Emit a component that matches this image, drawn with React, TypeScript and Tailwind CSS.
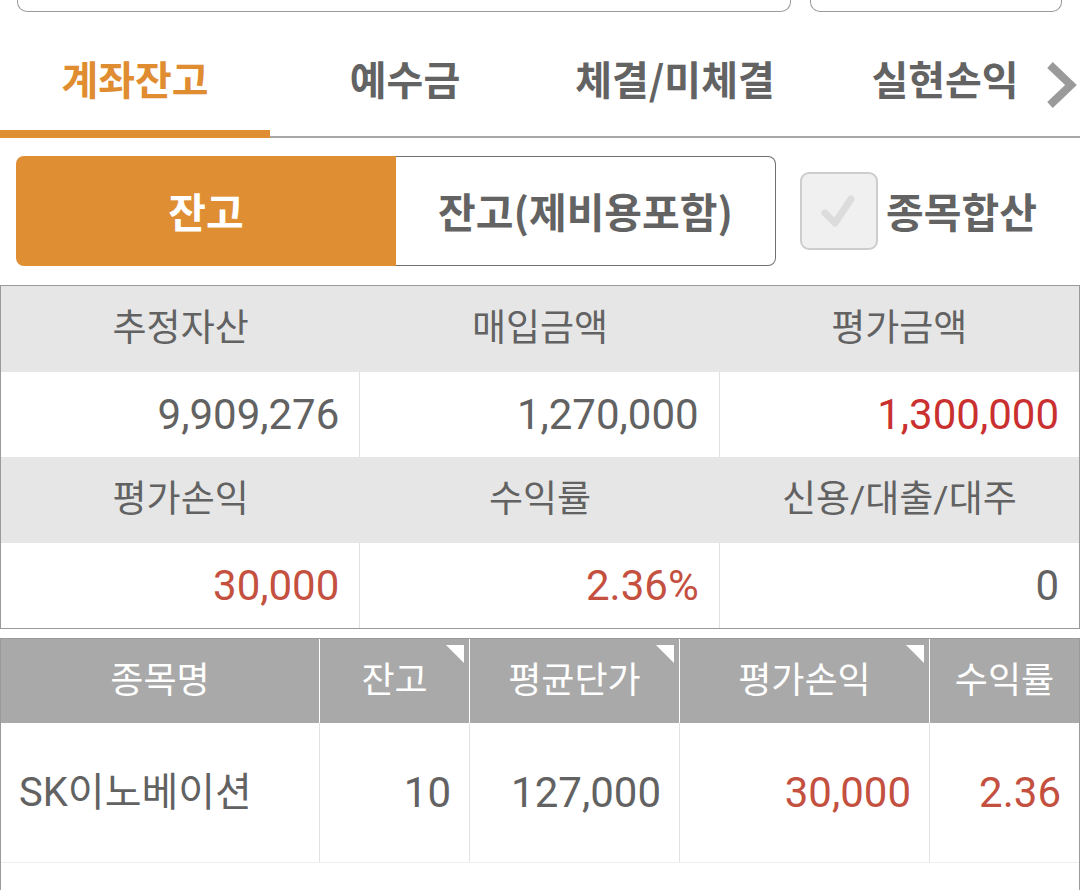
import React from "react";

const KR = "font-['Roboto','Noto_Sans_CJK_KR',sans-serif]";

function Tri() {
  return (
    <svg className="absolute top-[6px] right-[5px]" width="18" height="18" viewBox="0 0 18 18">
      <polygon points="0,0 18,0 18,18" fill="#ffffff" />
    </svg>
  );
}

export default function App() {
  const tabs = ["계좌잔고", "예수금", "체결/미체결", "실현손익"];
  return (
    <div className={`w-[1080px] h-[890px] overflow-hidden bg-white ${KR}`}>
      {/* top inputs edge */}
      <div className="flex h-[12px]">
        <div className="ml-[17px] w-[774px] h-full border border-t-0 border-[#9a9a9a] rounded-b-[10px]" />
        <div className="ml-[19px] w-[252px] h-full border border-t-0 border-[#9a9a9a] rounded-b-[10px]" />
      </div>

      {/* tabs */}
      <div className="relative flex h-[126px] border-b-[2px] border-[#a8a8a8]">
        {tabs.map((t, i) => (
          <div
            key={t}
            className={`relative w-[270px] flex items-center justify-center pt-[8px] text-[40px] font-bold font-['Noto_Sans_CJK_KR',sans-serif] ${
              i === 0 ? "text-[#e08d31]" : "text-[#636363]"
            }`}
          >
            {t}
            {i === 0 && <div className="absolute left-0 right-0 bottom-[-2px] h-[8px] bg-[#df8e33]" />}
          </div>
        ))}
        <svg className="absolute right-[3px] top-[50px]" width="32" height="46" viewBox="0 0 32 46">
          <polyline points="5,3 26,23 5,43" fill="none" stroke="#9a9a9a" strokeWidth="8" />
        </svg>
      </div>

      {/* segmented + checkbox */}
      <div className="flex items-center mt-[18px] h-[110px]">
        <div className="ml-[16px] w-[380px] h-full rounded-l-[8px] bg-[#df8e33] flex items-center justify-center text-white text-[41px] font-bold font-['Noto_Sans_CJK_KR',sans-serif]">
          잔고
        </div>
        <div className="w-[380px] h-full rounded-r-[8px] border border-l-0 border-[#707070] bg-white flex items-center justify-center text-[#636363] text-[41px] font-bold font-['Noto_Sans_CJK_KR',sans-serif]">
          잔고(제비용포함)
        </div>
        <div className="ml-[24px] w-[78px] h-[78px] rounded-[9px] border-[2px] border-[#cdcdcd] bg-[#f0f0f0] flex items-center justify-center">
          <svg width="44" height="44" viewBox="0 0 44 44">
            <polyline points="8,24 18,34 34,10" fill="none" stroke="#dcdcdc" strokeWidth="7" strokeLinecap="round" strokeLinejoin="round" />
          </svg>
        </div>
        <div className="ml-[8px] text-[41px] font-bold text-[#636363] font-['Noto_Sans_CJK_KR',sans-serif]">종목합산</div>
      </div>

      {/* summary */}
      <div className="mt-[19px] border border-[#9a9a9a] text-[#626262]">
        <div className="grid grid-cols-3 h-[86px] bg-[#e6e6e6] text-[37px]">
          <div className="flex items-center justify-center">추정자산</div>
          <div className="flex items-center justify-center">매입금액</div>
          <div className="flex items-center justify-center">평가금액</div>
        </div>
        <div className="grid grid-cols-3 h-[85px] text-[42px]">
          <div className="flex items-center justify-end pr-[20px] border-r border-[#e0e0e0]">9,909,276</div>
          <div className="flex items-center justify-end pr-[20px] border-r border-[#e0e0e0]">1,270,000</div>
          <div className="flex items-center justify-end pr-[20px] text-[#c9302f]">1,300,000</div>
        </div>
        <div className="grid grid-cols-3 h-[86px] bg-[#e6e6e6] text-[37px]">
          <div className="flex items-center justify-center">평가손익</div>
          <div className="flex items-center justify-center">수익률</div>
          <div className="flex items-center justify-center">신용/대출/대주</div>
        </div>
        <div className="grid grid-cols-3 h-[85px] text-[42px]">
          <div className="flex items-center justify-end pr-[20px] border-r border-[#e0e0e0] text-[#c4503f]">30,000</div>
          <div className="flex items-center justify-end pr-[20px] border-r border-[#e0e0e0] text-[#c4503f]">2.36%</div>
          <div className="flex items-center justify-end pr-[20px]">0</div>
        </div>
      </div>

      {/* holdings */}
      <div className="mt-[9px] border-x border-t border-[#9a9a9a] h-[260px]">
        <div className="flex h-[84px] bg-[#a9a9a9] text-white text-[36px]">
          <div className="w-[319px] flex items-center justify-center border-r border-white">종목명</div>
          <div className="relative w-[150px] flex items-center justify-center border-r border-white">
            잔고
            <Tri />
          </div>
          <div className="relative w-[210px] flex items-center justify-center border-r border-white">
            평균단가
            <Tri />
          </div>
          <div className="relative w-[250px] flex items-center justify-center border-r border-white">
            평가손익
            <Tri />
          </div>
          <div className="flex-1 flex items-center justify-center">수익률</div>
        </div>
        <div className="flex h-[140px] border-b border-[#eeeeee] text-[42px] text-[#626262]">
          <div className="w-[319px] flex items-center pl-[18px] border-r border-[#e2e2e2] text-[40px]">SK이노베이션</div>
          <div className="w-[150px] flex items-center justify-end pr-[18px] border-r border-[#e2e2e2]">10</div>
          <div className="w-[210px] flex items-center justify-end pr-[18px] border-r border-[#e2e2e2]">127,000</div>
          <div className="w-[250px] flex items-center justify-end pr-[18px] border-r border-[#e2e2e2] text-[#c4503f]">30,000</div>
          <div className="flex-1 flex items-center justify-end pr-[18px] text-[#c4503f]">2.36</div>
        </div>
      </div>
    </div>
  );
}
